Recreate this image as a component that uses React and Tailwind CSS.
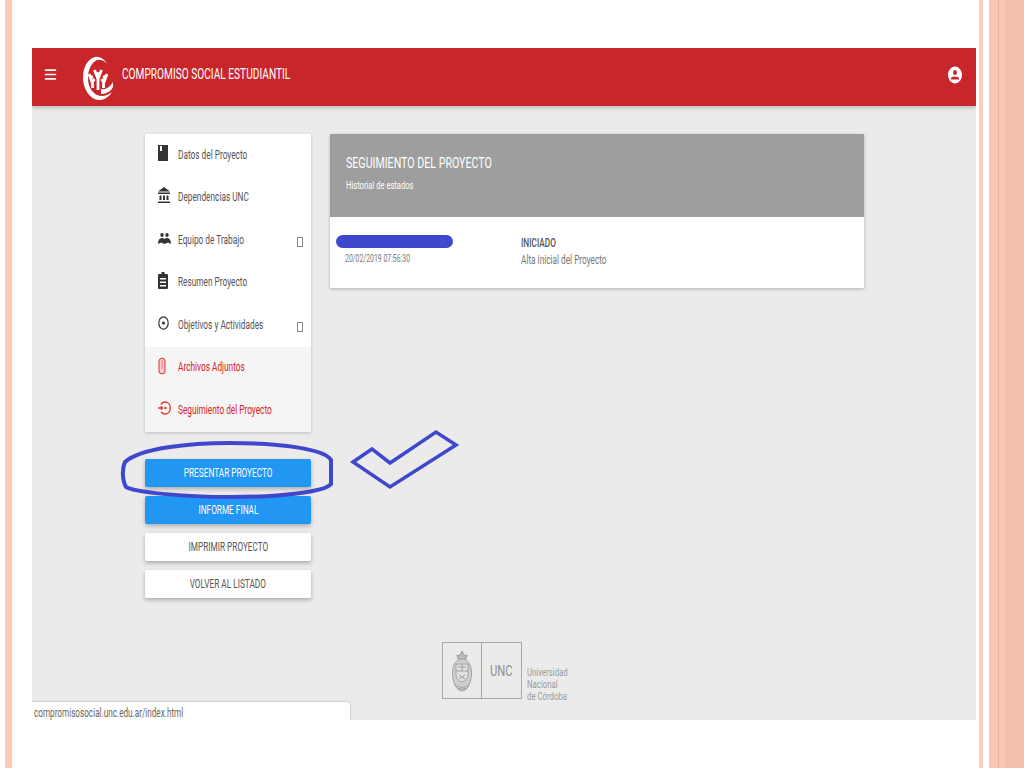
import { Menu } from 'lucide-react';

const font = "font-['Roboto',sans-serif]";

function UserIcon() {
    return (
        <svg width="14" height="18" viewBox="0 0 14 18">
            <ellipse cx="7" cy="9" rx="7" ry="8.5" fill="#fff" />
            <ellipse cx="7" cy="6.5" rx="2" ry="2.6" fill="#c9262c" />
            <path d="M2.800 13.500c0-2.400 2-3 4.200-3s4.200.6 4.200 3z" fill="#c9262c" />
        </svg>
    );
}

function Logo() {
    return (
        <svg width="32" height="48" viewBox="0 0 32 48" fill="none">
            <path d="M27 14C24 7 18 3 13 4 5 6 1 15 1 25c0 11 7 21 15 22 6 .5 11-3 14-8-5 4-10 5-15 3-6-3-9-10-9-17 0-9 4-16 9-18 5-1 10 2 12 7z" fill="#fff" />
            <g fill="#fff">
                <circle cx="16" cy="21" r="2" />
                <circle cx="9.500" cy="24" r="1.800" />
                <circle cx="22.500" cy="24" r="1.800" />
            </g>
            <g stroke="#fff" strokeWidth="2.800">
                <path d="M12.500 17l3.500 9 3.500-9M16 25v12" />
                <path d="M7 21l3 8 2.500-3M10.500 28v7" />
                <path d="M25 21l-3 8-2.500-3M21.500 28v7" />
            </g>
            <path d="M19 36c5 1 9-2 12-7v5c-2 4-6 7-12 7z" fill="#fff" />
        </svg>
    );
}

function DatosIcon() {
    return (
        <svg width="10" height="16" viewBox="0 0 10 16">
            <path d="M0 0h10v16H0z" fill="#333" />
            <path d="M2 1h2v5H2z" fill="#fff" />
        </svg>
    );
}

function BankIcon() {
    return (
        <svg width="12" height="17" viewBox="0 0 12 17" fill="#333">
            <path d="M6 0l6 4.500H0z" />
            <path d="M0 5.500h12V7H0zM1.500 8.500h2v4.500h-2zM5 8.500h2v4.500H5zM8.500 8.500h2v4.500h-2zM0 14.500h12V16H0z" />
        </svg>
    );
}

function PeopleIcon() {
    return (
        <svg width="13" height="11" viewBox="0 0 13 11" fill="#333">
            <ellipse cx="4" cy="2" rx="1.700" ry="2" />
            <ellipse cx="9" cy="2" rx="1.700" ry="2" />
            <path d="M0 11c0-4 1.500-6 4-6 1 0 2 .4 2.500 1.200C7 5.400 8 5 9 5c2.500 0 4 2 4 6l-3-1.500L6.500 11 3 9.500z" />
        </svg>
    );
}

function ClipboardIcon() {
    return (
        <svg width="10" height="17" viewBox="0 0 10 17">
            <path d="M1 2h2.500V0h3v2H9a1 1 0 0 1 1 1v13a1 1 0 0 1-1 1H1a1 1 0 0 1-1-1V3a1 1 0 0 1 1-1z" fill="#333" />
            <path d="M2 6h6v1.400H2zM2 9.500h6v1.400H2zM2 13h6v1.400H2z" fill="#fff" />
        </svg>
    );
}

function TargetIcon() {
    return (
        <svg width="11" height="14" viewBox="0 0 11 14" fill="none">
            <ellipse cx="5.500" cy="7" rx="4.700" ry="6.200" stroke="#333" strokeWidth="1.200" />
            <circle cx="5.500" cy="7" r="1.600" fill="#333" />
        </svg>
    );
}

function ClipIcon() {
    return (
        <svg width="8" height="18" viewBox="0 0 8 18" fill="none" stroke="#e53935" strokeWidth="1.100">
            <path d="M1 5c0-5 6-5 6 0v8c0 5-6 5-6 0z" fill="#f8d0d0" />
            <path d="M4 3v9" strokeOpacity="0.5" />
        </svg>
    );
}

function HistoryIcon() {
    return (
        <svg width="13" height="14" viewBox="0 0 13 14" fill="none" stroke="#e53935" strokeWidth="1.400">
            <path d="M3 3.500C4 1.500 5.500 1 7 1c3 0 5.300 2.500 5.300 6S10 13 7 13c-1.500 0-3-.7-4-2" />
            <path d="M0 7h4M2.800 5.200L4.500 7 2.800 8.800" />
            <circle cx="7.500" cy="7" r="1.200" fill="#e53935" stroke="none" />
        </svg>
    );
}

function Crest() {
    return (
        <svg width="20" height="42" viewBox="0 0 20 42" fill="none" stroke="#a0a0a0" strokeWidth="1">
            <path d="M6 9L5 5l2.500 1L10 1l2.500 5L15 5l-1 4z" fill="#bdbdbd" />
            <path d="M10 9c6 0 9.500 6 9.500 14S16 41 10 41 .5 31 .5 23 4 9 10 9z" fill="#cfcfcf" />
            <path d="M4 14h12v10c0 5-3 7-6 8-3-1-6-3-6-8z" fill="#e2e2e2" />
            <path d="M4 21h12M7 25l6 4M13 25l-6 4M10 14v7M6 17h8" />
            <path d="M3 35c4 3 10 3 14 0M5 38c3 1.500 7 1.500 10 0" />
        </svg>
    );
}

// icon cell + squeezed label, the screenshot is stretched vertically so text looks narrow
function SideItem({ icon, label, caret, active }) {
    return (
        <div className={`flex h-[42.5px] items-center pl-[13px] ${active ? 'bg-[#f5f5f5]' : ''}`}>
            <span className="flex w-[20px] shrink-0 -translate-y-[2px] justify-start">{icon}</span>
            <span className={`w-0 flex-1 -translate-y-[0.5px] whitespace-nowrap text-[12.5px] ${active ? 'text-[#e0202a]' : 'text-[#555]'}`}>
                <span className="inline-block origin-left scale-x-[0.662]">{label}</span>
            </span>
            {caret && <span className="mr-[8px] mt-[3px] h-[10px] w-[6px] shrink-0 border border-[#888]"></span>}
        </div>
    );
}

function ActionButton({ label, primary }) {
    return (
        <button
            className={`flex h-[28px] w-[166px] items-center justify-center rounded-[2px] text-[12.5px] shadow-[0_2px_4px_rgba(0,0,0,0.28)] ${primary ? 'bg-[#2196f3] text-white' : 'bg-white text-[#555]'}`}
        >
            <span className="inline-block scale-x-[0.66] whitespace-nowrap">{label}</span>
        </button>
    );
}

export default function App() {
    return (
        <div className={`relative flex h-[768px] w-[1024px] overflow-hidden bg-white ${font}`}>
            {/* slide left stripe */}
            <div className="ml-[5px] h-full w-[7px] bg-[#fcc9b5]"></div>

            {/* screenshot window */}
            <div className="ml-[20px] mt-[48px] h-[672px] w-[944px]">
                <div className="relative flex h-full flex-col overflow-hidden bg-[#ebebeb]">
                    <header className="flex h-[58px] shrink-0 items-center bg-[#c9262c] pb-[5px] shadow-[0_2px_4px_rgba(0,0,0,0.2)]">
                        <Menu size={15} strokeWidth={2.5} className="ml-[11px] text-white" />
                        <div className="ml-[24px] translate-y-[2px]">
                            <Logo />
                        </div>
                        <span className="ml-[8px] flex-1 whitespace-nowrap text-[14.5px] text-white">
                            <span className="inline-block origin-left scale-x-[0.7]">COMPROMISO SOCIAL ESTUDIANTIL</span>
                        </span>
                        <div className="mr-[14px]">
                            <UserIcon />
                        </div>
                    </header>

                    <div className="flex pl-[113px] pt-[28px]">
                        <div className="flex w-[166px] flex-col">
                            <nav className="bg-white shadow-[0_1px_3px_rgba(0,0,0,0.2)]">
                                <SideItem icon={<DatosIcon />} label="Datos del Proyecto" />
                                <SideItem icon={<BankIcon />} label="Dependencias UNC" />
                                <SideItem icon={<PeopleIcon />} label="Equipo de Trabajo" caret />
                                <SideItem icon={<ClipboardIcon />} label="Resumen Proyecto" />
                                <SideItem icon={<TargetIcon />} label="Objetivos y Actividades" caret />
                                <SideItem icon={<ClipIcon />} label="Archivos Adjuntos" active />
                                <SideItem icon={<HistoryIcon />} label="Seguimiento del Proyecto" active />
                            </nav>
                            <div className="mt-[27.5px] flex flex-col gap-[9px]">
                                <ActionButton label="PRESENTAR PROYECTO" primary />
                                <ActionButton label="INFORME FINAL" primary />
                                <ActionButton label="IMPRIMIR PROYECTO" />
                                <ActionButton label="VOLVER AL LISTADO" />
                            </div>
                        </div>

                        <section className="ml-[19px] h-[154px] w-[534px] bg-white shadow-[0_1px_3px_rgba(0,0,0,0.25)]">
                            <div className="h-[83px] bg-[#9e9e9e] pl-[16px] pt-[20px] text-white">
                                <div className="origin-left scale-x-[0.687] whitespace-nowrap text-[15.5px] leading-[18px]">SEGUIMIENTO DEL PROYECTO</div>
                                <div className="mt-[6px] origin-left scale-x-[0.66] whitespace-nowrap text-[11.5px] leading-[14px]">Historial de estados</div>
                            </div>
                            <div className="flex pl-[15px] pt-[19px]">
                                <div className="w-[176px] pt-[16px]">
                                    <div className="origin-left scale-x-[0.69] whitespace-nowrap text-[10px] leading-[14px] text-[#777]">20/02/2019 07:56:30</div>
                                </div>
                                <div>
                                    <div className="origin-left scale-x-[0.66] whitespace-nowrap text-[12.5px] font-medium leading-[14px] text-[#555]">INICIADO</div>
                                    <div className="mt-[3px] origin-left scale-x-[0.66] whitespace-nowrap text-[12.5px] leading-[14px] text-[#777]">Alta inicial del Proyecto</div>
                                </div>
                            </div>
                        </section>
                    </div>

                    {/* UNC footer logo */}
                    <div className="absolute left-[410px] top-[594px] flex items-end">
                        <div className="flex h-[57px] w-[80px] border border-[#a8a8a8]">
                            <div className="flex w-[39px] items-center justify-center border-r border-[#a8a8a8]">
                                <Crest />
                            </div>
                            <div className="pl-[8px] pt-[19px] text-[15px] leading-[18px] text-[#8f8f8f]">
                                <span className="inline-block origin-left scale-x-[0.75]">UNC</span>
                            </div>
                        </div>
                        <div className="mb-[-4px] ml-[5px] whitespace-nowrap text-[10px] leading-[12px] text-[#9a9a9a]">
                            <div className="origin-left scale-x-[0.78]">Universidad</div>
                            <div className="origin-left scale-x-[0.78]">Nacional</div>
                            <div className="origin-left scale-x-[0.78]">de Córdoba</div>
                        </div>
                    </div>

                    {/* browser status bar */}
                    <div className="absolute bottom-0 left-0 h-[18px] w-[318px] rounded-tr-[3px] bg-white pl-[2px] pt-[3px] text-[12px] leading-[17px] text-[#666] shadow-[0_0_2px_rgba(0,0,0,0.4)]">
                        <span className="inline-block origin-left scale-x-[0.68] whitespace-nowrap">compromisosocial.unc.edu.ar/index.html</span>
                    </div>
                </div>
            </div>

            {/* slide right stripes */}
            <div className="ml-[3px] h-full w-[4px] bg-[#fcd0c0]"></div>
            <div className="ml-[6px] h-full w-[9px] bg-[#f3c6b5]"></div>
            <div className="h-full w-[1px] bg-[#f9ae8c]"></div>
            <div className="h-full w-[7px] bg-[#f3c6b5]"></div>
            <div className="h-full w-[1px] bg-[#f5b79e]"></div>
            <div className="h-full flex-1 bg-[#f3c0ae]"></div>

            {/* blue marker annotations drawn over the slide */}
            <svg className="pointer-events-none absolute left-0 top-0" width="1024" height="768" viewBox="0 0 1024 768" fill="none">
                <rect x="336" y="235" width="117" height="13" rx="6.500" fill="#3f48cc" />
                <path d="M125 462C140 448 190 443 230 443c50 0 95 6 101 17v24c-6 8-51 13-101 13-50 0-95-5-104-10-4-7-4-19-1-25z" stroke="#3f48cc" strokeWidth="4" />
                <path d="M353 462l19-13 18 14 46-31 20 13-66 42z" stroke="#3f48cc" strokeWidth="3.500" />
            </svg>
        </div>
    );
}
